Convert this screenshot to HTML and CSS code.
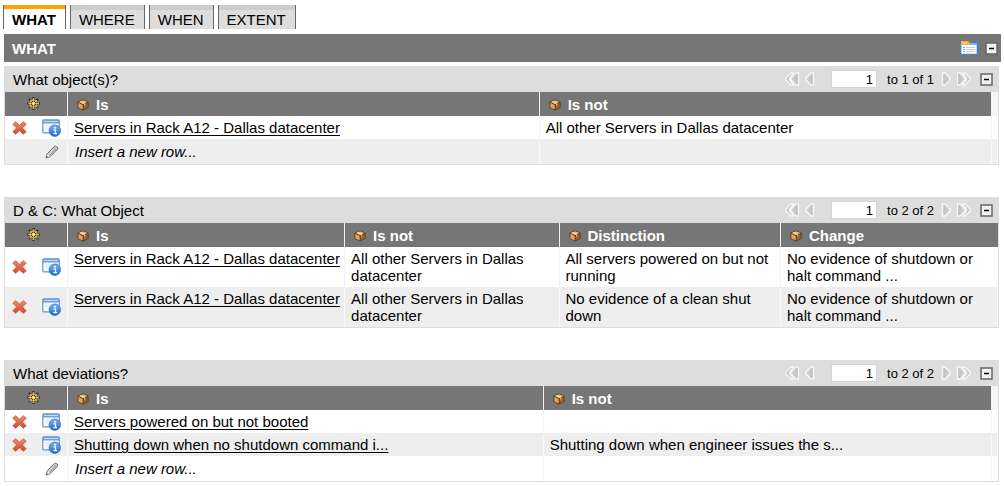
FILE: index.html
```html
<!DOCTYPE html>
<html lang="en">
<head>
<meta charset="utf-8">
<title>What</title>
<link rel="stylesheet" href="styles.css">
</head>
<body>
<svg class="sprite" width="0" height="0" aria-hidden="true">
  <defs>
    <linearGradient id="redFill" x1="0" y1="0" x2="0" y2="1"><stop offset="0" stop-color="#f08a6c"/><stop offset="1" stop-color="#cf4a2e"/></linearGradient>
    <linearGradient id="blueFill" x1="0" y1="0" x2="0" y2="1"><stop offset="0" stop-color="#7cb4f2"/><stop offset="1" stop-color="#1f69cf"/></linearGradient>
    <linearGradient id="arrowFill" x1="0" y1="0" x2="1" y2="0"><stop offset="0" stop-color="#d6d6d6"/><stop offset="1" stop-color="#bdbdbd"/></linearGradient>
  </defs>
  <symbol id="gear" viewBox="0 0 13 13">
    <g stroke="#2b2926" stroke-width="2" stroke-dasharray="2 1"><path d="M6.5 0v13M0 6.5h13M2 2l9 9M11 2l-9 9"/></g>
    <circle cx="6.5" cy="6.5" r="3.5" fill="#4b4223" stroke="#d9b23c" stroke-width="1"/>
    <path d="M6.5 1v11M1 6.5h11M3 3l7 7M10 3l-7 7" stroke="#e8c654" stroke-width=".8"/>
    <circle cx="6.5" cy="6.5" r="1.3" fill="#fff3b4"/>
  </symbol>
  <symbol id="box" viewBox="0 0 12 12">
    <path d="M6 .5l5.5 2.3v6L6 11.5 .5 8.800v-6z" fill="#5b3312"/>
    <path d="M6 1.200l4.500 1.800L6 5.200 1.500 3z" fill="#e9bd83"/>
    <path d="M1.300 3.700L5.700 5.900v4.700L1.300 8.500z" fill="#dda362"/>
    <path d="M6.500 5.900l4.200-2.200v4.700l-4.200 2.200z" fill="#9c6330"/>
    <path d="M3.200 2.300l4.500 2.100v2" fill="none" stroke="#f8deb0" stroke-width=".9"/>
  </symbol>
  <symbol id="delete" viewBox="0 0 15 14">
    <path d="M3.700.7L7.500 4.200 11.300.7l2.900 2.500-3.700 3.700 3.700 3.900-2.900 2.500-3.800-3.600-3.800 3.600-2.900-2.500 3.700-3.900L.8 3.200z" fill="url(#redFill)" stroke="#cc5138" stroke-width=".8" stroke-linejoin="round"/>
  </symbol>
  <symbol id="info" viewBox="0 0 19 18">
    <rect x=".8" y=".8" width="16.500" height="13" rx="1" fill="#f7fbff" stroke="#6593d0" stroke-width="1.200"/>
    <path d="M1 1h16v3.500H1z" fill="#6b9fe0"/><path d="M2 2.500h14" stroke="#c4dcf8"/>
    <path d="M3 7h7M3 9h4" stroke="#d8e7f8"/>
    <circle cx="12.800" cy="11.700" r="5.700" fill="url(#blueFill)" stroke="#2b6dc5" stroke-width=".8"/>
    <circle cx="13" cy="8.700" r="1" fill="#fff"/>
    <path d="M11.500 10.800h2v3.500M11.500 14.600h3.500" fill="none" stroke="#fff" stroke-width="1.300"/>
  </symbol>
  <symbol id="pencil" viewBox="0 0 14 14">
    <path d="M1 13l1.200-4.200L9.500 1.400c1.200-1 3.900 1.200 3 2.800L5.200 11.600z" fill="#d2d2d2" stroke="#696969" stroke-width="1" stroke-linejoin="round"/>
    <path d="M4.300 10.400l6-6M8.600 2.500l2.800 2.800" stroke="#8a8a8a" stroke-width=".8"/>
    <path d="M2.800 8.900l2.100 2.300-3.700 1.600z" fill="#f4f4f4"/><path d="M1 13l.7-2.200 1.500 1.400z" fill="#555"/>
  </symbol>
  <symbol id="prev" viewBox="0 0 10 14"><path d="M8.500 1v12H6L1 8V6l5-5z" fill="url(#arrowFill)" stroke="#f6f6f6" stroke-width="1.500" stroke-linejoin="round"/></symbol>
  <symbol id="first" viewBox="0 0 15 14"><path d="M13.500 1v12H11L6 8V6l5-5z" fill="url(#arrowFill)" stroke="#f6f6f6" stroke-width="1.300" stroke-linejoin="round"/><path d="M8.500 1L4.500 6.500v1L8.500 13H6L1 8V6l5-5z" fill="#c6c6c6" stroke="#f6f6f6" stroke-width="1.300" stroke-linejoin="round"/></symbol>
  <symbol id="minus" viewBox="0 0 13 13"><rect x="1" y="1" width="11" height="11" fill="#f1f1f1" stroke="#666" stroke-width="1.500"/><path d="M4 6.500h5" stroke="#000" stroke-width="1.500"/></symbol>
  <symbol id="list" viewBox="0 0 18 14">
    <rect x=".7" y="1.700" width="16.600" height="11.600" rx=".5" fill="#fff" stroke="#477be2" stroke-width="1.300"/>
    <path d="M1 2h16v2H1z" fill="#84aef4"/><path d="M1 0h7l2 2v2H1z" fill="#f3b33b"/><path d="M2 2h5" stroke="#ffe189"/>
    <path d="M3 6.500h2M3 8.500h2M3 10.500h2" stroke="#7da7ed"/><path d="M6 6.500h9M6 8.500h9M6 10.500h8" stroke="#b8cef3"/>
  </symbol>
</svg>

<nav class="tabs">
  <button class="tab active" type="button">WHAT</button>
  <button class="tab" type="button">WHERE</button>
  <button class="tab" type="button">WHEN</button>
  <button class="tab" type="button">EXTENT</button>
</nav>

<header class="bar">
  <h1>WHAT</h1>
  <div class="bar-tools">
    <button class="icon" type="button" aria-label="Show list"><svg width="18" height="14"><use href="#list"/></svg></button>
    <button class="icon" type="button" aria-label="Collapse all"><svg width="13" height="13"><use href="#minus"/></svg></button>
  </div>
</header>

<main>
  <section class="panel">
    <div class="panel-head">
      <h2>What object(s)?</h2>
      <div class="pager">
        <button class="icon" type="button" aria-label="First page"><svg width="15" height="14"><use href="#first"/></svg></button>
        <button class="icon" type="button" aria-label="Previous page"><svg width="10" height="14"><use href="#prev"/></svg></button>
        <input id="row1" type="text" value="1" aria-label="First row">
        <label for="row1">to 1 of 1</label>
        <button class="icon flip" type="button" aria-label="Next page"><svg width="10" height="14"><use href="#prev"/></svg></button>
        <button class="icon flip" type="button" aria-label="Last page"><svg width="15" height="14"><use href="#first"/></svg></button>
        <button class="icon toggle" type="button" aria-label="Collapse"><svg width="13" height="13"><use href="#minus"/></svg></button>
      </div>
    </div>
    <table>
      <colgroup><col class="col-tools"><col class="col-is"><col><col class="col-end"></colgroup>
      <thead><tr>
        <th class="gear"><button class="icon" type="button" aria-label="Personalize"><svg width="13" height="13"><use href="#gear"/></svg></button></th>
        <th><span class="title"><svg width="12" height="12"><use href="#box"/></svg>Is</span></th>
        <th><span class="title"><svg width="12" height="12"><use href="#box"/></svg>Is not</span></th>
        <td class="end"></td>
      </tr></thead>
      <tbody>
        <tr>
          <td class="tools"><div class="actions"><button class="icon" type="button" aria-label="Delete"><svg width="15" height="14"><use href="#delete"/></svg></button><button class="icon" type="button" aria-label="Details"><svg width="19" height="18"><use href="#info"/></svg></button></div></td>
          <td><a href="#">Servers in Rack A12 - Dallas datacenter</a></td>
          <td>All other Servers in Dallas datacenter</td>
          <td class="end"></td>
        </tr>
        <tr class="insert alt">
          <td class="tools"><div class="actions"><svg width="14" height="14"><use href="#pencil"/></svg></div></td>
          <td>Insert a new row...</td><td></td><td class="end"></td>
        </tr>
      </tbody>
    </table>
  </section>

  <section class="panel">
    <div class="panel-head">
      <h2>D &amp; C: What Object</h2>
      <div class="pager">
        <button class="icon" type="button" aria-label="First page"><svg width="15" height="14"><use href="#first"/></svg></button>
        <button class="icon" type="button" aria-label="Previous page"><svg width="10" height="14"><use href="#prev"/></svg></button>
        <input id="row2" type="text" value="1" aria-label="First row">
        <label for="row2">to 2 of 2</label>
        <button class="icon flip" type="button" aria-label="Next page"><svg width="10" height="14"><use href="#prev"/></svg></button>
        <button class="icon flip" type="button" aria-label="Last page"><svg width="15" height="14"><use href="#first"/></svg></button>
        <button class="icon toggle" type="button" aria-label="Collapse"><svg width="13" height="13"><use href="#minus"/></svg></button>
      </div>
    </div>
    <table>
      <colgroup><col class="col-tools"><col class="col-object"><col class="col-isnot"><col class="col-distinction"><col></colgroup>
      <thead><tr>
        <th class="gear"><button class="icon" type="button" aria-label="Personalize"><svg width="13" height="13"><use href="#gear"/></svg></button></th>
        <th><span class="title"><svg width="12" height="12"><use href="#box"/></svg>Is</span></th>
        <th><span class="title"><svg width="12" height="12"><use href="#box"/></svg>Is not</span></th>
        <th><span class="title"><svg width="12" height="12"><use href="#box"/></svg>Distinction</span></th>
        <th><span class="title"><svg width="12" height="12"><use href="#box"/></svg>Change</span></th>
      </tr></thead>
      <tbody>
        <tr>
          <td class="tools"><div class="actions"><button class="icon" type="button" aria-label="Delete"><svg width="15" height="14"><use href="#delete"/></svg></button><button class="icon" type="button" aria-label="Details"><svg width="19" height="18"><use href="#info"/></svg></button></div></td>
          <td><a href="#">Servers in Rack A12 - Dallas datacenter</a></td>
          <td>All other Servers in Dallas datacenter</td>
          <td>All servers powered on but not running</td>
          <td>No evidence of shutdown or halt command ...</td>
        </tr>
        <tr class="alt">
          <td class="tools"><div class="actions"><button class="icon" type="button" aria-label="Delete"><svg width="15" height="14"><use href="#delete"/></svg></button><button class="icon" type="button" aria-label="Details"><svg width="19" height="18"><use href="#info"/></svg></button></div></td>
          <td><a href="#">Servers in Rack A12 - Dallas datacenter</a></td>
          <td>All other Servers in Dallas datacenter</td>
          <td>No evidence of a clean shut down</td>
          <td>No evidence of shutdown or halt command ...</td>
        </tr>
      </tbody>
    </table>
  </section>

  <section class="panel">
    <div class="panel-head">
      <h2>What deviations?</h2>
      <div class="pager">
        <button class="icon" type="button" aria-label="First page"><svg width="15" height="14"><use href="#first"/></svg></button>
        <button class="icon" type="button" aria-label="Previous page"><svg width="10" height="14"><use href="#prev"/></svg></button>
        <input id="row3" type="text" value="1" aria-label="First row">
        <label for="row3">to 2 of 2</label>
        <button class="icon flip" type="button" aria-label="Next page"><svg width="10" height="14"><use href="#prev"/></svg></button>
        <button class="icon flip" type="button" aria-label="Last page"><svg width="15" height="14"><use href="#first"/></svg></button>
        <button class="icon toggle" type="button" aria-label="Collapse"><svg width="13" height="13"><use href="#minus"/></svg></button>
      </div>
    </div>
    <table>
      <colgroup><col class="col-tools"><col class="col-deviation"><col><col class="col-end"></colgroup>
      <thead><tr>
        <th class="gear"><button class="icon" type="button" aria-label="Personalize"><svg width="13" height="13"><use href="#gear"/></svg></button></th>
        <th><span class="title"><svg width="12" height="12"><use href="#box"/></svg>Is</span></th>
        <th><span class="title"><svg width="12" height="12"><use href="#box"/></svg>Is not</span></th>
        <td class="end"></td>
      </tr></thead>
      <tbody>
        <tr>
          <td class="tools"><div class="actions"><button class="icon" type="button" aria-label="Delete"><svg width="15" height="14"><use href="#delete"/></svg></button><button class="icon" type="button" aria-label="Details"><svg width="19" height="18"><use href="#info"/></svg></button></div></td>
          <td><a href="#">Servers powered on but not booted</a></td><td></td><td class="end"></td>
        </tr>
        <tr class="alt">
          <td class="tools"><div class="actions"><button class="icon" type="button" aria-label="Delete"><svg width="15" height="14"><use href="#delete"/></svg></button><button class="icon" type="button" aria-label="Details"><svg width="19" height="18"><use href="#info"/></svg></button></div></td>
          <td><a href="#">Shutting down when no shutdown command i...</a></td>
          <td>Shutting down when engineer issues the s...</td><td class="end"></td>
        </tr>
        <tr class="insert">
          <td class="tools"><div class="actions"><svg width="14" height="14"><use href="#pencil"/></svg></div></td>
          <td>Insert a new row...</td><td></td><td class="end"></td>
        </tr>
      </tbody>
    </table>
  </section>
</main>
</body>
</html>
```
FILE: styles.css
```css
* { box-sizing: border-box; }
body {
  margin: 0;
  padding: 5px 3px 4px;
  background: #fff;
  color: #000;
  font: 15px/17px "Liberation Sans", Arial, Helvetica, sans-serif;
}
svg { display: block; flex: none; }
.sprite { width: 0; height: 0; }
h1, h2 { margin: 0; font-size: 15px; line-height: 17px; }
h2 { font-weight: normal; }
button, input { margin: 0; font: inherit; color: inherit; }
a { color: #000; white-space: nowrap; text-underline-offset: 2px; text-decoration-thickness: 1px; }
.icon { display: block; padding: 0; border: 0; background: none; }
.flip { transform: scaleX(-1); }

.tabs { display: flex; gap: 4px; }
.tab {
  padding: 6px 9px 1px 8px;
  border: solid #666;
  border-width: 0 1px;
  background: linear-gradient(#ccc 5px, #ddd 5px);
}
.tab.active { background: linear-gradient(#fba400 4px, #fff 4px); font-weight: bold; }

.bar {
  display: flex;
  align-items: center;
  justify-content: space-between;
  height: 28px;
  margin: 5px 0 4px 1px;
  padding: 0 3px 0 8px;
  background: #767676;
  color: #fff;
}
.bar-tools { display: flex; align-items: center; gap: 7px; }

main { display: grid; gap: 32px; margin: 0 2px 0 1px; }
.panel { border: 1px solid #ddd; border-top: 0; }
.panel-head {
  display: flex;
  align-items: center;
  justify-content: space-between;
  height: 26px;
  padding: 0 5px 0 8px;
  background: #ddd;
}
.pager { display: flex; align-items: center; gap: 5px; font-size: 13px; }
.pager input {
  width: 46px;
  height: 18px;
  margin: 0 5px 0 11px;
  padding: 0 3px;
  border: 1px solid #d4d4d4;
  background: #fff;
  text-align: right;
}
.pager label { margin-right: 2px; }
.toggle { margin-left: 4px; }

table { width: 100%; table-layout: fixed; border-collapse: collapse; }
.col-tools { width: 63px; }
.col-end { width: 6px; }
.col-is { width: 47.5%; }
.col-object { width: 27.9%; }
.col-isnot { width: 21.6%; }
.col-distinction { width: 22.3%; }
.col-deviation { width: 47.9%; }
th {
  height: 24px;
  padding: 0 9px;
  background: #767676;
  color: #fff;
  text-align: left;
  vertical-align: middle;
  box-shadow: inset -1px 0 #f2f2f2;
}
th:last-child { box-shadow: none; }
.gear .icon { margin: 0 auto; padding: 0 6px 2px 0; }
.title { display: flex; align-items: center; gap: 7px; padding-top: 1px; }
td { padding: 3px 6px; vertical-align: top; box-shadow: inset -1px 0 #f2f2f2; }
td:last-child { box-shadow: none; }
.alt td { background: #eee; box-shadow: inset -1px 0 #f8f8f8; }
td.end { padding: 0; }
thead td.end { background: #f5f5f5; }
.tools { padding: 0 7px; vertical-align: middle; }
.actions { display: flex; align-items: center; justify-content: space-between; }
.insert td { padding: 4px 7px; font-style: italic; }
.insert td.tools { padding: 0 9px; vertical-align: middle; }
.insert .actions { justify-content: flex-end; }
```
